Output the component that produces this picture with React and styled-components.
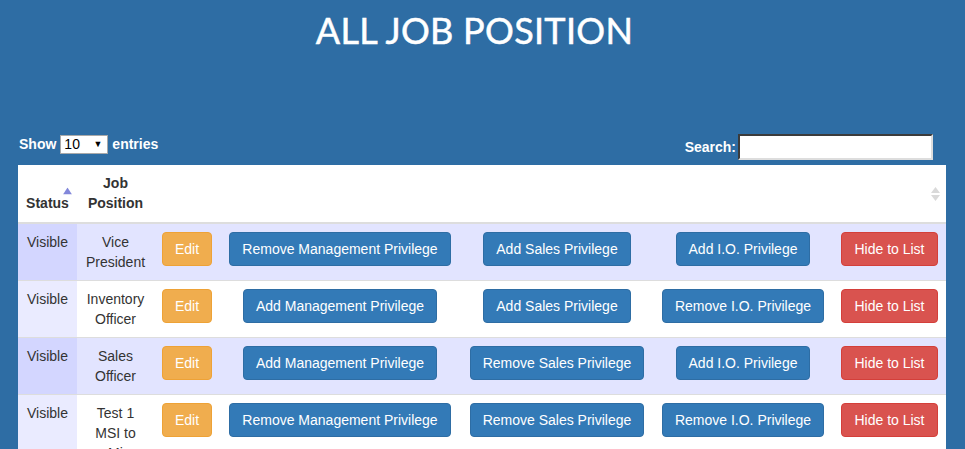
import React from "react";
import styled, { createGlobalStyle } from "styled-components";

const Global = createGlobalStyle`
  html, body { margin: 0; padding: 0; }
  body {
    background: #2e6da4;
    font-family: "Liberation Sans", Arial, Helvetica, sans-serif;
    font-size: 14px;
    line-height: 20px;
    color: #333;
  }
  * { box-sizing: border-box; }
`;

const Page = styled.div`
  padding: 0 19px 0 18px;
`;

const Title = styled.h1`
  margin: 0;
  padding: 10px 15px 0 0;
  height: 134px;
  text-align: center;
  font-family: "Lato", "Open Sans", sans-serif;
  font-weight: 400;
  font-size: 36px;
  line-height: 40px;
  letter-spacing: 0.3px;
  color: #fff;
  -webkit-text-stroke: 0.5px #fff;
`;

const Controls = styled.div`
  display: flex;
  justify-content: space-between;
  align-items: flex-start;
  height: 31px;
  padding: 0 13px 0 1px;
`;

const Label = styled.label`
  display: flex;
  align-items: center;
  gap: ${(p) => p.$gap}px;
  color: #fff;
  font-weight: 700;
  font-size: 14px;
`;

const SelectBox = styled.span`
  position: relative;
  display: inline-flex;
  align-items: center;
  width: 48px;
  height: 19px;
  background: #fff;
  border: 1px solid #a9a9a9;
  color: #000;
  font-weight: 400;
  font-size: 14px;
  padding-left: 3px;
`;

const Caret = styled.span`
  position: absolute;
  right: 5px;
  top: 0;
  font-size: 9px;
  line-height: 17px;
`;

const SearchInput = styled.input`
  width: 195px;
  height: 26px;
  margin: 0;
  border: 2px inset #ddd;
  border-top-color: #8f8f8f;
  border-left-color: #8f8f8f;
  background: #fff;
`;

const Table = styled.table`
  width: 928px;
  table-layout: fixed;
  border-collapse: collapse;
  background: #fff;
`;

const Th = styled.th`
  position: relative;
  padding: 8px 8px 9px;
  vertical-align: bottom;
  text-align: center;
  font-weight: 700;
  font-size: 14px;
  line-height: 20px;
  border-bottom: 2px solid #ddd;
`;

const SortIcon = styled.svg`
  position: absolute;
  right: ${(p) => p.$right}px;
  top: 50%;
  transform: translateY(-50%);
`;

const Tr = styled.tr`
  background: ${(p) => (p.$odd ? "#e2e4ff" : "#ffffff")};
`;

const Td = styled.td`
  padding: 8px;
  vertical-align: top;
  text-align: center;
  border-top: 1px solid #ddd;
  white-space: ${(p) => (p.$nowrap ? "nowrap" : "normal")};
  background: ${(p) => (p.$sorted ? (p.$odd ? "#d3d6ff" : "#eaebff") : "transparent")};
`;

const colors = {
  primary: ["#337ab7", "#2e6da4"],
  warning: ["#f0ad4e", "#eea236"],
  danger: ["#d9534f", "#d43f3a"],
};

const Btn = styled.button`
  display: inline-block;
  padding: 6px 12px;
  font-family: "Liberation Sans", Arial, Helvetica, sans-serif;
  font-size: 14px;
  line-height: 20px;
  color: #fff;
  white-space: nowrap;
  border-radius: 4px;
  border: 1px solid ${(p) => colors[p.$kind][1]};
  background: ${(p) => colors[p.$kind][0]};
  cursor: pointer;
`;

const rows = [
  { name: ["Vice", "President"], mgmt: "Remove", sales: "Add", io: "Add" },
  { name: ["Inventory", "Officer"], mgmt: "Add", sales: "Add", io: "Remove" },
  { name: ["Sales", "Officer"], mgmt: "Add", sales: "Remove", io: "Add" },
  { name: ["Test 1", "MSI to", "Mi"], mgmt: "Remove", sales: "Remove", io: "Remove" },
];

export default function App() {
  return (
    <>
      <Global />
      <Page>
        <Title>ALL JOB POSITION</Title>
        <Controls>
          <Label $gap={4}>
            Show
            <SelectBox>
              10<Caret>▼</Caret>
            </SelectBox>
            entries
          </Label>
          <Label $gap={2}>
            Search:
            <SearchInput type="text" />
          </Label>
        </Controls>
        <Table>
          <colgroup>
            <col style={{ width: 59 }} />
            <col style={{ width: 77 }} />
            <col style={{ width: 65 }} />
            <col style={{ width: 242 }} />
            <col style={{ width: 192 }} />
            <col style={{ width: 180 }} />
            <col style={{ width: 113 }} />
          </colgroup>
          <thead>
            <tr>
              <Th>
                Status
                <SortIcon $right={5} width="9" height="7" viewBox="0 0 9 7" style={{ marginTop: -3 }}>
                  <polygon points="4.5,0 9,7 0,7" fill="#8287da" />
                </SortIcon>
              </Th>
              <Th>Job Position</Th>
              <Th />
              <Th />
              <Th />
              <Th />
              <Th>
                <SortIcon $right={6} width="9" height="14" viewBox="0 0 9 14">
                  <polygon points="4.5,0 9,6 0,6" fill="#d9d9d9" />
                  <polygon points="0,8 9,8 4.5,14" fill="#d9d9d9" />
                </SortIcon>
              </Th>
            </tr>
          </thead>
          <tbody>
            {rows.map((r, i) => {
              const odd = i % 2 === 0;
              return (
                <Tr key={i} $odd={odd}>
                  <Td $sorted $odd={odd}>Visible</Td>
                  <Td>
                    {r.name.map((l, j) => (
                      <div key={j}>{l}</div>
                    ))}
                  </Td>
                  <Td $nowrap>
                    <Btn $kind="warning">Edit</Btn>
                  </Td>
                  <Td $nowrap>
                    <Btn $kind="primary">{r.mgmt} Management Privilege</Btn>
                  </Td>
                  <Td $nowrap>
                    <Btn $kind="primary">{r.sales} Sales Privilege</Btn>
                  </Td>
                  <Td $nowrap>
                    <Btn $kind="primary">{r.io} I.O. Privilege</Btn>
                  </Td>
                  <Td $nowrap>
                    <Btn $kind="danger">Hide to List</Btn>
                  </Td>
                </Tr>
              );
            })}
          </tbody>
        </Table>
      </Page>
    </>
  );
}
